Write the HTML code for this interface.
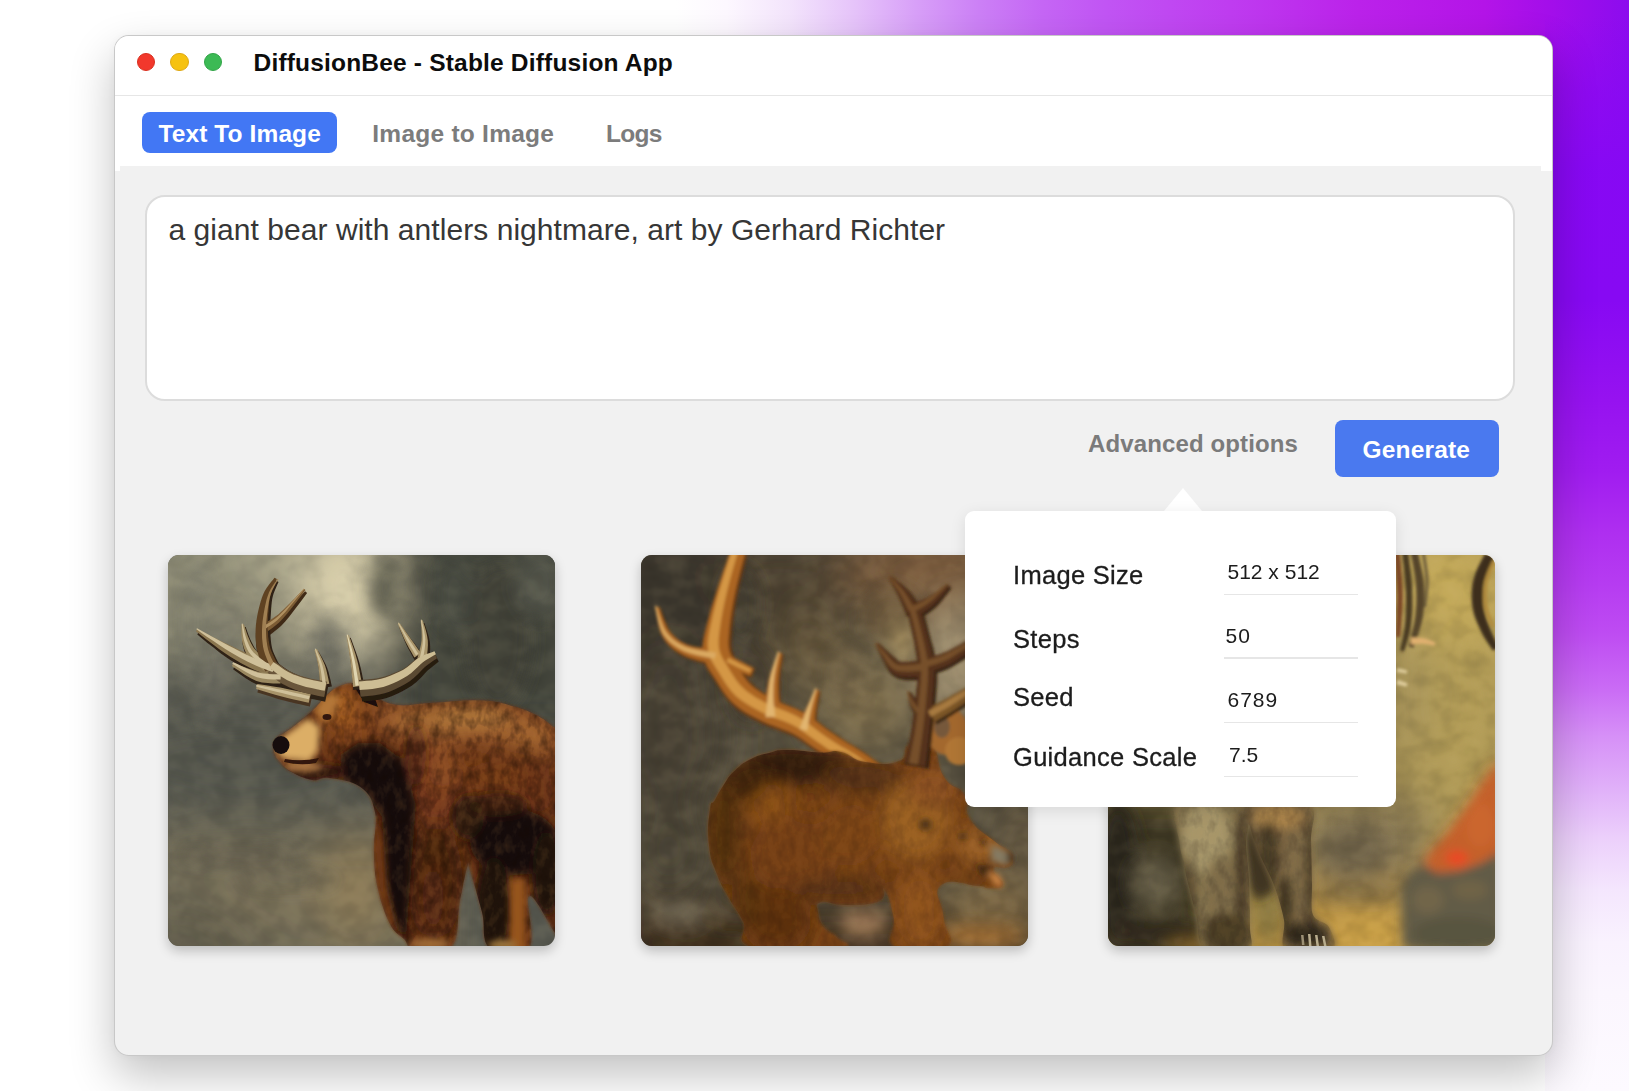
<!DOCTYPE html>
<html lang="en">
<head>
<meta charset="utf-8">
<title>DiffusionBee - Stable Diffusion App</title>
<style>
*{box-sizing:border-box;margin:0;padding:0}
html,body{width:1629px;height:1091px;overflow:hidden}
body{position:relative;background:#fff;font-family:"Liberation Sans",Arial,sans-serif;color:#111}
#bg{position:absolute;left:0;top:0;width:1629px;height:320px;
 background:linear-gradient(to right,#ffffff 0%,#ffffff 41.5%,#fdf8ff 44.6%,#f3e4fc 48.5%,#e6c4fa 52.4%,#d8a0f8 56.2%,#cc80f6 60.1%,#c566f5 64%,#c155f4 67.8%,#bf3cf0 75.6%,#bb22ea 83.4%,#b414e8 91.1%,#a40eea 95%,#8c0cee 100%)}
#bgr{position:absolute;left:1545px;top:0;width:84px;height:1091px;
 background:linear-gradient(to bottom,rgba(134,8,244,0) 15px,rgba(134,8,244,.55) 90px,rgba(134,8,244,.92) 170px,#8709f3 300px,#9612f0 400px,#a01cf0 470px,#ae2ef0 531px,#b63cf1 585px,#be4cf2 634px,#ca6cf5 690px,#d690f7 736px,#e0b0f9 788px,#ecd0fb 839px,#f4e6fd 890px,#f9f2fe 942px,#fbf6fe 993px,#fdfaff 1091px)}
#win{position:absolute;left:114px;top:35px;width:1438.9px;height:1021.3px;border-radius:15px;background:#f1f1f1;
 border:1px solid rgba(0,0,0,.17);
 box-shadow:0 20px 45px rgba(0,0,0,.24),0 0 8px rgba(0,0,0,.03);overflow:hidden}
#inner{position:absolute;left:-115px;top:-36px;width:1629px;height:1091px}
#titlebar{position:absolute;left:115px;top:36px;width:1438px;height:60px;background:#fff;border-bottom:1.5px solid #e6e6e6}
.tl{position:absolute;top:53px;width:18.4px;height:18.4px;border-radius:50%}
#tl1{left:136.5px;background:#f2382c;border:1px solid #d9301f}
#tl2{left:170.2px;background:#f6c210;border:1px solid #dfa915}
#tl3{left:204.1px;background:#3cba55;border:1px solid #32a548}
#title{position:absolute;left:253.5px;top:47.8px;font-size:24.5px;font-weight:bold;letter-spacing:.19px;white-space:nowrap;color:#0c0c0c;line-height:30px}
#tabs{position:absolute;left:115px;top:96px;width:1438px;height:69.5px;background:#fff}
#nl{position:absolute;left:115px;top:165px;width:5px;height:6px;background:#fff}
#nr{position:absolute;left:1541px;top:165px;width:12px;height:6px;background:#fff}
#tab1{position:absolute;left:142px;top:111.5px;width:195px;height:41.5px;border-radius:8px;background:#4277f4}
.tabt{position:absolute;top:119px;font-size:24.5px;font-weight:bold;white-space:nowrap;line-height:30px}
#t1{left:158.5px;color:#fff;letter-spacing:.1px}
#t2{left:372.3px;color:#7c7c7c;letter-spacing:.25px}
#t3{left:606px;color:#7c7c7c;letter-spacing:-.7px}
#ta{position:absolute;left:144.5px;top:195px;width:1370px;height:205.5px;border-radius:20px;background:#fff;border:2px solid #dcdcdc}
#prompt{position:absolute;left:168.5px;top:212px;font-size:30px;letter-spacing:.05px;white-space:nowrap;color:#363636;line-height:36px}
#adv{position:absolute;left:1088px;top:428.9px;font-size:24px;font-weight:bold;letter-spacing:.13px;color:#7b7b7b;white-space:nowrap;line-height:30px}
#gen{position:absolute;left:1334.5px;top:420px;width:164px;height:57px;border-radius:8px;background:#4a79ef}
#gent{position:absolute;left:1362.5px;top:434.8px;font-size:24.5px;font-weight:bold;letter-spacing:.17px;color:#fff;white-space:nowrap;line-height:30px}
.img{position:absolute;top:555px;width:387px;height:391px;border-radius:11px;overflow:hidden;box-shadow:0 5px 12px rgba(0,0,0,.22)}
.img svg{display:block;position:absolute;left:0;top:0}
#im1{left:168px}#im2{left:641px}#im3{left:1107.5px}
#pop{position:absolute;left:964.5px;top:510.5px;width:431.5px;height:296.5px;border-radius:9px;background:#fff;box-shadow:0 4px 16px rgba(0,0,0,.10)}
#tri{position:absolute;left:1164px;top:487.5px;width:0;height:0;border-left:19px solid transparent;border-right:19px solid transparent;border-bottom:23.5px solid #fff}
.lb{position:absolute;left:1013px;font-size:25.5px;color:#1c1c1c;-webkit-text-stroke:.3px #1c1c1c;white-space:nowrap;line-height:30px;letter-spacing:.3px}
.vl{position:absolute;left:1227.5px;font-size:21px;color:#1c1c1c;white-space:nowrap;line-height:26px}
.ul{position:absolute;left:1223.5px;width:134px;height:1.5px;background:#e6e6e6}
</style>
</head>
<body>
<div id="bg"></div><div id="bgr"></div>
<div id="win"><div id="inner">
 <div id="titlebar"></div>
 <div class="tl" id="tl1"></div><div class="tl" id="tl2"></div><div class="tl" id="tl3"></div>
 <div id="title">DiffusionBee - Stable Diffusion App</div>
 <div id="tabs"></div><div id="nl"></div><div id="nr"></div>
 <div id="tab1"></div>
 <div class="tabt" id="t1">Text To Image</div>
 <div class="tabt" id="t2">Image to Image</div>
 <div class="tabt" id="t3">Logs</div>
 <div id="ta"></div>
 <div id="prompt">a giant bear with antlers nightmare, art by Gerhard Richter</div>
 <div id="adv">Advanced options</div>
 <div id="gen"></div><div id="gent">Generate</div>

 <div class="img" id="im1"><svg width="387" height="391" viewBox="0 0 387 391"><defs><filter id="p1b22" x="-60%" y="-60%" width="220%" height="220%"><feGaussianBlur stdDeviation="22"/></filter><filter id="p1b14" x="-60%" y="-60%" width="220%" height="220%"><feGaussianBlur stdDeviation="14"/></filter><filter id="p1b9" x="-60%" y="-60%" width="220%" height="220%"><feGaussianBlur stdDeviation="9"/></filter><filter id="p1b5" x="-60%" y="-60%" width="220%" height="220%"><feGaussianBlur stdDeviation="5"/></filter><filter id="p1b3" x="-60%" y="-60%" width="220%" height="220%"><feGaussianBlur stdDeviation="3"/></filter><filter id="p1b2" x="-60%" y="-60%" width="220%" height="220%"><feGaussianBlur stdDeviation="1.7"/></filter><filter id="p1b1" x="-60%" y="-60%" width="220%" height="220%"><feGaussianBlur stdDeviation="0.7"/></filter><filter id="p1nd" x="0" y="0" width="100%" height="100%" color-interpolation-filters="sRGB"><feTurbulence type="fractalNoise" baseFrequency="0.045 0.06" numOctaves="4" seed="161"/><feColorMatrix type="matrix" values="0 0 0 0 0  0 0 0 0 0  0 0 0 0 0  1.8 0 0 0 -0.75"/><feGaussianBlur stdDeviation="1.6"/></filter><filter id="p1nl" x="0" y="0" width="100%" height="100%" color-interpolation-filters="sRGB"><feTurbulence type="fractalNoise" baseFrequency="0.045 0.06" numOctaves="4" seed="161"/><feColorMatrix type="matrix" values="0 0 0 0 1  0 0 0 0 .92  0 0 0 0 .7  -1.8 0 0 0 1.0"/><feGaussianBlur stdDeviation="1.6"/></filter><filter id="p1fd" x="0" y="0" width="100%" height="100%" color-interpolation-filters="sRGB"><feTurbulence type="fractalNoise" baseFrequency="0.11 0.07" numOctaves="3" seed="164"/><feColorMatrix type="matrix" values="0 0 0 0 .08  0 0 0 0 .03  0 0 0 0 0  2.4 0 0 0 -1.0"/></filter><filter id="p1fl" x="0" y="0" width="100%" height="100%" color-interpolation-filters="sRGB"><feTurbulence type="fractalNoise" baseFrequency="0.11 0.07" numOctaves="3" seed="164"/><feColorMatrix type="matrix" values="0 0 0 0 .95  0 0 0 0 .65  0 0 0 0 .3  -2.4 0 0 0 1.25"/></filter><clipPath id="p1cl"><rect width="387" height="391"/></clipPath></defs><g clip-path="url(#p1cl)"><rect width="387" height="391" fill="#595a51"/><g filter="url(#p1b22)"><ellipse cx="50" cy="35" rx="150" ry="75" fill="#8f8d77"/><ellipse cx="120" cy="70" rx="120" ry="45" fill="#85836f"/><ellipse cx="150" cy="8" rx="85" ry="38" fill="#a8a48a"/><ellipse cx="178" cy="38" rx="44" ry="70" fill="#d8cfac"/><rect x="226" y="-40" width="220" height="225" fill="#45463d"/><ellipse cx="80" cy="205" rx="150" ry="48" fill="#55564e"/><rect x="-40" y="268" width="330" height="170" fill="#706a57"/><ellipse cx="115" cy="345" rx="75" ry="26" fill="#7c725a"/><ellipse cx="190" cy="335" rx="34" ry="55" fill="#8e7d59"/><ellipse cx="15" cy="385" rx="70" ry="22" fill="#5a5747"/></g><g filter="url(#p1b9)"><ellipse cx="160" cy="92" rx="20" ry="32" fill="#68685e" opacity="0.85"/><ellipse cx="30" cy="70" rx="12" ry="70" fill="#77766a" opacity="0.55"/><ellipse cx="52" cy="110" rx="7" ry="70" fill="#737268" opacity="0.45" transform="rotate(12 52 110)"/><ellipse cx="330" cy="80" rx="34" ry="75" fill="#414239" opacity="0.8"/><ellipse cx="285" cy="40" rx="20" ry="40" fill="#50524a" opacity="0.6"/><ellipse cx="372" cy="28" rx="25" ry="35" fill="#595b50" opacity="0.8"/><ellipse cx="218" cy="32" rx="16" ry="34" fill="#5c5c4c" opacity="0.85"/><ellipse cx="70" cy="300" rx="60" ry="9" fill="#625d4d" opacity="0.7"/><ellipse cx="120" cy="325" rx="50" ry="7" fill="#666050" opacity="0.6"/></g><rect width="387" height="391" filter="url(#p1nd)" opacity="0.13"/><rect width="387" height="391" filter="url(#p1nl)" opacity="0.09"/><g filter="url(#p1b2)"><path d="M106,190 C106.6,187 105,186.8 109,183 C113,179.2 118.6,176.8 126,171 C133.4,165.2 139.2,160.4 146,154 C152.8,147.6 154.8,143.6 160,139 C165.2,134.4 166.8,133.2 172,131 C177.2,128.8 180.8,127.6 186,128 C191.2,128.4 194,130.4 198,133 C202,135.6 199.8,137.6 206,141 C212.2,144.4 217.6,148.6 229,150 C240.4,151.4 246,148.9 263,148 C280,147.1 297.4,144.8 314,145.5 C330.6,146.2 334.8,148.4 346,151.5 C357.2,154.6 361.8,156.7 370,161 C378.2,165.3 383,170.6 387,173 C391,175.4 389.4,131.6 390,173 C390.6,214.4 390.6,339 390,380 C389.4,421 392.8,385.8 387,378 C381.2,370.2 366.2,338 361,341 C355.8,344 368.8,382.6 361,393 C353.2,403.4 331.4,400.2 322,393 C312.6,385.8 318,372.6 314,357 C310,341.4 304.8,324.6 302,315 C299.2,305.4 302,303 300,309 C298,315 295.4,328.2 292,345 C288.6,361.8 292.2,383.4 283,393 C273.8,402.6 255.4,394.8 246,393 C236.6,391.2 240.8,388.8 236,384 C231.2,379.2 227.3,379.4 222,369 C216.7,358.6 212.7,346.6 209.5,332 C206.3,317.4 206.5,311 206,296 C205.5,281 209.7,269.8 207,257 C204.3,244.2 201.7,238.8 192.5,232 C183.3,225.2 170.7,224.4 161,223 C151.3,221.6 151.8,226.4 144,225 C136.2,223.6 128.6,219.8 122,216 C115.4,212.2 114.2,209.6 111,206 C107.8,202.4 107,201.2 106,198 C105,194.8 105.4,193 106,190Z" fill="#653116"/></g><clipPath id="p1bc"><path d="M106,190 C106.6,187 105,186.8 109,183 C113,179.2 118.6,176.8 126,171 C133.4,165.2 139.2,160.4 146,154 C152.8,147.6 154.8,143.6 160,139 C165.2,134.4 166.8,133.2 172,131 C177.2,128.8 180.8,127.6 186,128 C191.2,128.4 194,130.4 198,133 C202,135.6 199.8,137.6 206,141 C212.2,144.4 217.6,148.6 229,150 C240.4,151.4 246,148.9 263,148 C280,147.1 297.4,144.8 314,145.5 C330.6,146.2 334.8,148.4 346,151.5 C357.2,154.6 361.8,156.7 370,161 C378.2,165.3 383,170.6 387,173 C391,175.4 389.4,131.6 390,173 C390.6,214.4 390.6,339 390,380 C389.4,421 392.8,385.8 387,378 C381.2,370.2 366.2,338 361,341 C355.8,344 368.8,382.6 361,393 C353.2,403.4 331.4,400.2 322,393 C312.6,385.8 318,372.6 314,357 C310,341.4 304.8,324.6 302,315 C299.2,305.4 302,303 300,309 C298,315 295.4,328.2 292,345 C288.6,361.8 292.2,383.4 283,393 C273.8,402.6 255.4,394.8 246,393 C236.6,391.2 240.8,388.8 236,384 C231.2,379.2 227.3,379.4 222,369 C216.7,358.6 212.7,346.6 209.5,332 C206.3,317.4 206.5,311 206,296 C205.5,281 209.7,269.8 207,257 C204.3,244.2 201.7,238.8 192.5,232 C183.3,225.2 170.7,224.4 161,223 C151.3,221.6 151.8,226.4 144,225 C136.2,223.6 128.6,219.8 122,216 C115.4,212.2 114.2,209.6 111,206 C107.8,202.4 107,201.2 106,198 C105,194.8 105.4,193 106,190Z" fill="#000"/></clipPath><g filter="url(#p1b9)" clip-path="url(#p1bc)"><path d="M200,138 L229,150 L263,148 L314,145 L346,151 L370,161 L390,173 L390,205 L350,192 L300,187 L250,190 L215,178Z" fill="#94572a"/><ellipse cx="300" cy="163" rx="45" ry="10" fill="#b98442" opacity="0.7"/><ellipse cx="250" cy="166" rx="25" ry="9" fill="#a66f35" opacity="0.7"/><ellipse cx="360" cy="180" rx="22" ry="12" fill="#a56931" opacity="0.7"/><ellipse cx="268" cy="232" rx="28" ry="44" fill="#75391a"/><ellipse cx="275" cy="212" rx="16" ry="22" fill="#905122" opacity="0.8"/><ellipse cx="335" cy="222" rx="45" ry="22" fill="#733a17"/><ellipse cx="370" cy="235" rx="20" ry="30" fill="#683313"/><ellipse cx="268" cy="325" rx="26" ry="58" fill="#4c2510"/><ellipse cx="264" cy="345" rx="12" ry="35" fill="#5e2e13" opacity="0.8"/><ellipse cx="172" cy="152" rx="22" ry="20" fill="#a35d24"/><ellipse cx="185" cy="182" rx="18" ry="22" fill="#89481a"/></g><g filter="url(#p1b5)" clip-path="url(#p1bc)"><path d="M172,200 L190,188 L212,188 L236,206 L248,250 L242,330 L238,388 L226,369 L217,330 L214,262 L196,236 L176,226Z" fill="#170f09"/><ellipse cx="205" cy="212" rx="20" ry="18" fill="#140c08"/><ellipse cx="346" cy="287" rx="44" ry="33" fill="#170f09"/><ellipse cx="300" cy="262" rx="16" ry="22" fill="#26160d" opacity="0.8"/><ellipse cx="326" cy="352" rx="18" ry="50" fill="#20130b"/><ellipse cx="379" cy="318" rx="15" ry="42" fill="#20130b"/><ellipse cx="146" cy="217" rx="32" ry="8" fill="#2e150a"/><ellipse cx="330" cy="250" rx="30" ry="12" fill="#341c0f" opacity="0.7"/><ellipse cx="248" cy="200" rx="10" ry="30" fill="#43220f" opacity="0.6"/></g><g clip-path="url(#p1bc)"><rect width="387" height="391" filter="url(#p1fd)" opacity="0.45"/><rect width="387" height="391" filter="url(#p1fl)" opacity="0.12"/></g><g filter="url(#p1b3)" clip-path="url(#p1bc)"><rect x="342" y="324" width="15" height="75" fill="#96541f"/><path d="M206,262 L206,296 L209.5,332 L222,369 L230,380 L219,340 L214,280Z" fill="#713a14"/><path d="M109,186 L124,175 L140,163 L152,172 L150,196 L142,206 L116,204 L107,196Z" fill="#dcae66"/><path d="M146,154 L160,139 L172,140 L166,158 L156,168Z" fill="#b47737"/><ellipse cx="262" cy="389" rx="20" ry="6" fill="#9e6936"/><ellipse cx="334" cy="390" rx="14" ry="5" fill="#9e773c"/><ellipse cx="135" cy="212" rx="20" ry="5" fill="#ad7743"/></g><g filter="url(#p1b1)"><ellipse cx="113" cy="190" rx="8.5" ry="9" fill="#130e0b"/><ellipse cx="159" cy="162" rx="4.5" ry="3" fill="#301609"/><path d="M116,207 Q132,211 148,208 L151,203 Q134,207 117,204 Z" fill="#301509"/><path d="M184,128 L198,133 L206,141 L210,152 L196,147Z" fill="#1a100a"/></g><g filter="url(#p1b1)"><path d="M110,110.3 L107.1,109.3 L103.2,108.1 L98.6,106.7 L93.8,105.1 L89.2,103.4 L84.6,101.5 L79.9,99.4 L74.9,97.1 L69.6,94.7 L64,92.1 L57.4,89.1 L49.8,85.6 L42.2,82.1 L35.6,79 L30.9,76.8 L29.3,79.6 L33.2,82.8 L38.9,87.4 L45.5,92.6 L52.2,97.9 L58.2,102.3 L63.5,105.8 L68.6,109 L73.5,111.9 L78.3,114.6 L83,117 L88,119.4 L93,121.6 L97.6,123.5 L101.5,125 L104.2,126.1Z" fill="#2f2014"/><path d="M106.2,109.7 L103.8,108 L100.4,105.6 L96.7,103 L93.2,100.4 L90.7,98.1 L89,96.2 L87.5,94.2 L86.1,91.9 L84.8,89.5 L83.5,86.9 L82.1,84 L80.7,80.6 L79.5,77.2 L78.4,74.1 L77.7,72 L74.5,72.4 L74.4,74.7 L74.3,77.9 L74.2,81.8 L74.3,85.8 L74.7,89.5 L75.4,92.8 L76.3,96.1 L77.5,99.4 L79.2,102.8 L81.5,106.3 L84.7,109.8 L88.6,113.2 L92.4,116.3 L95.7,118.9 L98,120.7Z" fill="#2f2014"/><path d="M114.3,119.7 L111.2,119.6 L106.8,119.6 L102,119.5 L97.1,119.2 L92.7,118.6 L87.9,117.4 L82,115.6 L76.1,113.5 L70.8,111.5 L67.1,110.2 L65.1,114.2 L68.2,116.5 L72.7,119.8 L78.1,123.5 L83.8,127.1 L89.5,129.8 L95.3,131.4 L101.1,132.2 L106.5,132.4 L110.9,132.5 L113.9,132.7Z" fill="#2f2014"/><path d="M144.3,140.8 L140.6,140 L135.4,138.9 L129.3,137.5 L123,136.2 L117.2,135.1 L111.5,134.1 L105.4,133.2 L99.5,132.3 L94.4,131.6 L90.8,131 L89.4,137.4 L92.8,138.5 L97.7,140 L103.4,141.8 L109.3,143.7 L115,145.3 L120.7,146.7 L126.9,148.2 L133,149.6 L138.2,150.8 L141.9,151.6Z" fill="#4a3522"/><path d="M163.9,131.4 L163.3,128.9 L162.6,125.5 L161.6,121.4 L160.5,117.1 L159.2,113.1 L157.6,109.3 L155.6,105.4 L153.6,101.8 L151.8,98.8 L150.6,96.6 L147.6,97.8 L148.1,100.2 L148.9,103.6 L149.7,107.6 L150.4,111.6 L151,115.3 L151.4,118.9 L151.7,123 L151.9,127 L152.1,130.5 L152.3,133Z" fill="#2f2014"/><path d="M102.1,79.8 L103.9,78.5 L106.3,76.6 L109.5,74.1 L113,70.9 L116.8,67 L121.2,61.7 L126.3,55.1 L131.5,48.3 L136,42.2 L139.1,38.1 L137.1,36.3 L133.4,40 L128.1,45.4 L122.1,51.4 L116.2,57.1 L111.4,61.4 L107.5,64.3 L104,66.4 L100.9,68.1 L98.1,69.4 L96.1,70.6Z" fill="#3f2b18"/><path d="M112.8,112.7 L111.5,110.1 L109.7,106.5 L107.7,102.6 L105.9,98.6 L104.6,95.2 L103.8,91.9 L103.2,88.4 L102.8,84.8 L102.5,81 L102.2,77.3 L102.1,73.5 L102.2,69.7 L102.4,65.8 L102.6,61.9 L102.9,58.1 L103.1,54.5 L103.4,51.1 L103.7,47.8 L104.1,44.6 L104.7,41.7 L105.6,38.5 L106.9,35.2 L108.3,31.9 L109.6,29.1 L110.5,27 L107.7,25.4 L106.3,27 L104.3,29.4 L101.9,32.2 L99.5,35.4 L97.5,38.7 L95.9,42.1 L94.5,45.5 L93.3,49 L92.3,52.6 L91.3,56.3 L90.4,60.1 L89.6,64.2 L88.8,68.4 L88.3,72.8 L88,77.1 L87.8,81.4 L87.9,85.7 L88.2,90.1 L88.7,94.6 L89.6,99.2 L91,104.1 L92.8,109 L94.7,113.5 L96.4,117.2 L97.4,119.7Z" fill="#2f2014"/><path d="M161,127.6 L157.8,127 L153.1,126.2 L148,125.2 L142.9,124.2 L138.7,123.1 L135.3,122.1 L132.1,121 L129.1,119.8 L126.3,118.6 L123.6,117.3 L120.8,115.7 L117.8,113.8 L114.8,111.7 L112.2,109.8 L110.2,108.5 L100,121.9 L101.7,123.4 L104.3,125.5 L107.4,128.1 L111,130.7 L114.6,133.1 L118.1,135.1 L121.7,136.8 L125.4,138.4 L129.2,139.9 L133.5,141.3 L138.4,142.7 L144,144 L149.4,145.1 L154,146.1 L157.2,146.8Z" fill="#2f2014"/><path d="M255.2,100.6 L253.7,98.5 L251.6,95.5 L249.1,92.1 L246.6,88.6 L244.2,85.4 L241.8,82.2 L239.3,78.7 L236.8,75.4 L234.7,72.6 L233.2,70.6 L231,71.8 L231.9,74.2 L233.2,77.5 L234.7,81.3 L236.3,85.3 L238,89 L239.8,92.7 L241.9,96.6 L244,100.4 L245.7,103.6 L247,105.8Z" fill="#2f2014"/><path d="M260.9,109.3 L261.1,106.5 L261.5,102.6 L261.9,97.9 L262.2,93 L262,88.2 L261.2,83.5 L259.9,78.8 L258.5,74.4 L257.2,70.6 L256.4,68 L253.8,68.4 L254,71.2 L254.2,75.2 L254.4,79.7 L254.5,84.2 L254.2,88.2 L253.5,92.1 L252.4,96.4 L251.2,100.7 L250.1,104.4 L249.3,107.1Z" fill="#2f2014"/><path d="M196.9,133.4 L196.2,129.9 L195.2,124.9 L194,119 L192.7,113 L191.3,107.4 L189.6,101.9 L187.6,96.2 L185.6,90.7 L183.9,86.1 L182.7,82.8 L179.5,83.6 L180,87.1 L180.7,92 L181.5,97.7 L182.3,103.6 L182.9,109 L183.5,114.5 L184.1,120.5 L184.6,126.4 L185,131.4 L185.3,135Z" fill="#2f2014"/><path d="M194.1,146.6 L197.1,146.2 L201.6,145.9 L207,145.3 L212.9,144.4 L218.7,143 L224.1,141 L229.3,138.8 L234.4,136.3 L239.2,133.6 L243.7,130.7 L247.9,127.5 L251.5,124.1 L254.5,121 L257,118.3 L259.1,116.1 L261.4,114 L264.1,111.9 L266.7,109.8 L269,108 L270.7,106.7 L267.5,99.7 L265.4,100.1 L262.5,100.6 L259,101.4 L255.1,102.6 L251.1,104.3 L247.3,106.6 L243.9,109.2 L240.7,111.7 L237.7,113.9 L234.5,115.7 L230.7,117.4 L226.4,119.2 L222,120.9 L217.5,122.3 L213.5,123.4 L209.3,124.2 L204.6,124.8 L199.7,125.2 L195.3,125.6 L192.1,125.8Z" fill="#261a11"/><path d="M108,109 L105.1,108.1 L101.2,106.9 L96.6,105.4 L91.8,103.7 L87.2,101.9 L82.6,100 L77.8,97.8 L72.9,95.5 L67.6,93 L62,90.3 L55.5,87.2 L48,83.5 L40.5,79.8 L34,76.6 L29.4,74.3 L28,76.5 L32.1,79.6 L37.8,84 L44.5,89.1 L51.3,94.2 L57.4,98.5 L62.7,101.9 L67.8,105 L72.7,107.9 L77.5,110.4 L82.2,112.9 L87.2,115.2 L92.2,117.3 L96.8,119.2 L100.7,120.7 L103.4,121.8Z" fill="#8a7650"/><path d="M104,108 L101.6,106.3 L98.2,103.9 L94.5,101.2 L91,98.5 L88.4,96.1 L86.6,94.1 L85.1,91.9 L83.7,89.5 L82.4,87 L81.2,84.3 L79.9,81.3 L78.7,77.9 L77.6,74.4 L76.6,71.4 L76,69.2 L73.4,69.6 L73.4,71.8 L73.4,75.1 L73.4,78.8 L73.7,82.8 L74.2,86.5 L75,89.7 L75.8,92.8 L77.1,96.1 L78.7,99.3 L81,102.7 L84.2,106 L88,109.4 L91.8,112.5 L95.2,115 L97.4,116.8Z" fill="#9c895f"/><path d="M112.9,118.2 L109.7,118.1 L105.4,118.1 L100.5,117.9 L95.6,117.6 L91,116.9 L86.1,115.6 L80.2,113.6 L74.3,111.3 L69.2,109.2 L65.5,107.8 L63.9,111 L67.1,113.2 L71.7,116.3 L77.1,119.9 L82.8,123.3 L88.4,125.9 L94,127.4 L99.8,128.1 L105.1,128.4 L109.5,128.5 L112.5,128.6Z" fill="#9a8860"/><path d="M142.7,139.1 L139,138.3 L133.7,137.1 L127.7,135.8 L121.4,134.5 L115.6,133.3 L109.9,132.3 L103.8,131.2 L97.9,130.3 L92.9,129.5 L89.3,128.9 L88.1,133.9 L91.6,135 L96.5,136.5 L102.2,138.2 L108.1,139.9 L113.8,141.5 L119.5,142.9 L125.8,144.4 L131.8,145.7 L137.1,146.9 L140.7,147.7Z" fill="#a8946a"/><path d="M161.3,128.7 L160.8,126.3 L160.1,122.8 L159.2,118.8 L158.2,114.5 L157,110.6 L155.4,106.7 L153.6,102.9 L151.7,99.2 L150,96.1 L148.9,93.9 L146.5,94.9 L147.1,97.3 L147.9,100.6 L148.9,104.6 L149.7,108.6 L150.4,112.2 L150.9,115.9 L151.3,120 L151.6,124.1 L151.9,127.6 L152.1,130.1Z" fill="#a8946a"/><path d="M100.1,76.1 L101.9,74.8 L104.4,73 L107.5,70.5 L111.1,67.5 L114.9,63.6 L119.3,58.4 L124.5,51.9 L129.7,45.2 L134.3,39.2 L137.5,35.1 L135.9,33.7 L132.3,37.5 L127.1,42.9 L121.1,49 L115.3,54.7 L110.5,59.2 L106.7,62.1 L103.1,64.4 L100,66.2 L97.3,67.5 L95.3,68.7Z" fill="#7b5b34"/><path d="M110.2,110.4 L108.9,107.8 L107.1,104.3 L105.2,100.3 L103.4,96.2 L102.1,92.7 L101.3,89.3 L100.7,85.7 L100.2,82 L100,78.2 L99.8,74.4 L99.7,70.7 L99.8,66.8 L100,62.9 L100.3,59 L100.6,55.2 L100.9,51.6 L101.2,48.1 L101.6,44.8 L102.1,41.6 L102.8,38.6 L103.8,35.5 L105.1,32.2 L106.6,28.9 L107.9,26.1 L108.9,24.1 L106.5,22.7 L105.2,24.4 L103.2,26.8 L100.9,29.7 L98.6,32.9 L96.6,36.2 L95.1,39.5 L93.8,42.9 L92.7,46.4 L91.7,49.9 L90.8,53.6 L89.9,57.5 L89.1,61.5 L88.4,65.7 L87.9,70.1 L87.6,74.4 L87.5,78.6 L87.6,82.9 L87.9,87.2 L88.4,91.6 L89.3,96.1 L90.7,100.9 L92.5,105.7 L94.4,110.2 L96.1,113.9 L97.2,116.4Z" fill="#5f4324"/><path d="M159.2,126.8 L156,126.1 L151.4,125.3 L146.2,124.3 L141.1,123.2 L136.8,122.1 L133.3,121.1 L130,119.9 L127,118.7 L124.1,117.4 L121.3,116.1 L118.4,114.4 L115.4,112.4 L112.4,110.3 L109.7,108.4 L107.8,107 L99.6,117.8 L101.4,119.2 L103.9,121.3 L107.1,123.8 L110.5,126.4 L114.1,128.7 L117.6,130.6 L121,132.3 L124.6,133.8 L128.4,135.3 L132.6,136.7 L137.5,138 L143,139.3 L148.4,140.4 L153,141.4 L156.2,142Z" fill="#6a563a"/><path d="M253,98.3 L251.5,96.2 L249.4,93.2 L247,89.8 L244.5,86.2 L242.2,82.9 L239.9,79.7 L237.4,76.2 L235.1,72.8 L233,69.9 L231.6,67.9 L229.8,68.9 L230.8,71.2 L232.1,74.5 L233.8,78.3 L235.5,82.2 L237.2,85.9 L239.1,89.5 L241.2,93.4 L243.3,97.1 L245.1,100.3 L246.4,102.5Z" fill="#a8946a"/><path d="M258.3,106.3 L258.6,103.5 L259.1,99.6 L259.6,95 L259.9,90.1 L259.8,85.4 L259.1,80.8 L258,76.1 L256.7,71.6 L255.5,67.9 L254.7,65.2 L252.7,65.6 L252.9,68.4 L253.3,72.3 L253.6,76.8 L253.7,81.4 L253.6,85.4 L253,89.4 L252,93.7 L250.9,98.1 L249.8,101.8 L249.1,104.5Z" fill="#a8946a"/><path d="M194.3,130.7 L193.7,127.2 L192.7,122.2 L191.6,116.4 L190.4,110.3 L189,104.7 L187.5,99.3 L185.6,93.5 L183.7,88.1 L182.1,83.4 L180.9,80.1 L178.5,80.7 L179,84.2 L179.8,89 L180.7,94.7 L181.6,100.6 L182.4,106.1 L183,111.6 L183.6,117.6 L184.2,123.4 L184.7,128.5 L185.1,132.1Z" fill="#a8946a"/><path d="M192.5,141.7 L195.5,141.4 L200,141 L205.4,140.4 L211.2,139.6 L216.8,138.2 L222,136.4 L227.2,134.2 L232.2,131.8 L236.9,129.2 L241.4,126.4 L245.5,123.3 L249,120.1 L252,117 L254.6,114.3 L256.9,112.1 L259.4,110.1 L262.2,108 L264.9,106.1 L267.3,104.4 L269,103.2 L266.4,97.6 L264.4,98.1 L261.5,98.7 L258.1,99.7 L254.3,100.9 L250.5,102.7 L246.9,105 L243.5,107.6 L240.4,110.2 L237.3,112.5 L234,114.4 L230.2,116.3 L225.8,118.1 L221.3,119.9 L216.8,121.4 L212.6,122.6 L208.3,123.4 L203.4,124.1 L198.5,124.5 L194.1,124.8 L190.9,125.1Z" fill="#5a4830"/><path d="M106.8,110.6 L104,109.7 L100.1,108.3 L95.5,106.8 L90.7,105 L85.9,103.1 L81.3,101 L76.5,98.7 L71.6,96.3 L66.4,93.6 L60.9,90.8 L54.4,87.3 L47.1,83.3 L39.8,79.3 L33.5,75.7 L29,73.3 L28.4,74.3 L32.5,77.2 L38.5,81.4 L45.4,86.1 L52.3,90.8 L58.5,94.8 L63.9,98.1 L69.1,101 L74,103.7 L78.8,106.2 L83.5,108.5 L88.3,110.7 L93.3,112.7 L97.9,114.5 L101.8,115.9 L104.6,117Z" fill="#cfc09a"/><path d="M101.4,110 L99.1,108.2 L95.7,105.8 L91.9,103 L88.4,100.1 L85.6,97.4 L83.6,94.9 L82.1,92.4 L80.8,89.8 L79.6,87 L78.5,84.2 L77.5,81 L76.6,77.4 L75.8,73.8 L75.1,70.7 L74.7,68.5 L73.7,68.7 L73.9,70.9 L74.2,74.1 L74.6,77.8 L75.1,81.5 L75.9,85 L76.8,88 L77.8,91 L79.1,94 L80.7,96.9 L82.8,99.8 L85.8,102.9 L89.5,106 L93.3,109 L96.7,111.5 L99,113.2Z" fill="#cfc09a"/><path d="M112.8,119.4 L109.7,119.3 L105.3,119.3 L100.3,119.1 L95.2,118.6 L90.4,117.8 L85.2,116.1 L79.4,113.7 L73.7,111.2 L68.7,108.8 L65.1,107.2 L64.3,108.8 L67.6,110.8 L72.3,113.7 L77.9,116.9 L83.6,120 L89,122.2 L94.4,123.5 L100,124.2 L105.2,124.4 L109.5,124.5 L112.6,124.6Z" fill="#cfc09a"/><path d="M141.6,141 L137.9,140.2 L132.7,139 L126.6,137.7 L120.3,136.3 L114.5,135.1 L108.8,133.9 L102.8,132.6 L96.9,131.4 L92,130.4 L88.4,129.7 L88,131.5 L91.5,132.5 L96.4,133.7 L102.2,135.2 L108.2,136.7 L113.9,138.1 L119.6,139.5 L125.9,140.9 L131.9,142.2 L137.2,143.4 L140.8,144.2Z" fill="#cfc09a"/><path d="M157.9,128.3 L157.5,125.9 L157,122.4 L156.3,118.4 L155.4,114.2 L154.4,110.3 L153.2,106.5 L151.6,102.6 L150,98.9 L148.6,95.7 L147.6,93.4 L146.8,93.8 L147.5,96.1 L148.6,99.4 L149.8,103.2 L151,107.2 L152,110.9 L152.7,114.7 L153.3,118.8 L153.8,122.9 L154.2,126.4 L154.5,128.9Z" fill="#cfc09a"/><path d="M97.9,73.4 L99.8,72.1 L102.3,70.4 L105.5,68.2 L109,65.4 L112.8,61.8 L117.4,56.9 L122.7,50.6 L128.2,44.1 L133,38.3 L136.3,34.3 L135.7,33.7 L132.2,37.6 L127.2,43.2 L121.5,49.5 L115.9,55.5 L111.2,60.2 L107.4,63.4 L103.8,65.9 L100.7,67.9 L98,69.4 L96.1,70.6Z" fill="#b09060"/><path d="M108.1,113 L106.9,110.4 L105.2,106.8 L103.2,102.7 L101.4,98.4 L100.1,94.4 L99.3,90.7 L98.7,86.8 L98.3,82.9 L98.1,79 L98,75 L98.1,71.1 L98.3,67 L98.7,63 L99.1,59.1 L99.6,55.3 L100.1,51.6 L100.7,48.1 L101.3,44.8 L102.1,41.5 L103,38.4 L104.3,35.2 L106,31.9 L107.7,28.8 L109.3,26.1 L110.4,24.2 L109.6,23.8 L108.4,25.6 L106.6,28.1 L104.6,31.1 L102.6,34.3 L101,37.6 L99.8,40.8 L98.7,44.1 L97.9,47.6 L97.1,51.1 L96.4,54.7 L95.7,58.6 L95.1,62.6 L94.5,66.7 L94.2,70.9 L94,75 L94,79.1 L94.1,83.2 L94.5,87.3 L95,91.4 L95.9,95.6 L97.3,99.9 L99.1,104.5 L101,108.8 L102.7,112.4 L103.9,115Z" fill="#a08052"/><path d="M158.3,127.8 L155.1,127.2 L150.5,126.3 L145.2,125.2 L140,124.1 L135.6,123 L131.9,121.8 L128.5,120.6 L125.4,119.4 L122.3,118 L119.4,116.5 L116.4,114.7 L113.2,112.5 L110.2,110.3 L107.5,108.4 L105.6,107 L101.4,112.6 L103.2,114.1 L105.7,116.1 L108.8,118.5 L112.2,121 L115.6,123.1 L118.9,124.9 L122.2,126.5 L125.7,127.9 L129.4,129.3 L133.4,130.6 L138.1,131.9 L143.5,133.1 L148.9,134.2 L153.5,135.2 L156.7,135.8Z" fill="#cbbb92"/><path d="M250.4,98.8 L249,96.7 L247,93.6 L244.7,90.1 L242.3,86.4 L240.1,83 L238,79.7 L235.8,76 L233.7,72.5 L231.8,69.5 L230.5,67.4 L229.9,67.8 L231,70 L232.6,73.2 L234.4,76.8 L236.4,80.6 L238.3,84.2 L240.3,87.7 L242.5,91.4 L244.7,95.1 L246.6,98.2 L248,100.4Z" fill="#cfc09a"/><path d="M254.9,104.9 L255.4,102.2 L256,98.3 L256.7,93.8 L257.2,89.1 L257.4,84.6 L256.9,80.2 L256.1,75.5 L255.1,71 L254.2,67.2 L253.6,64.5 L252.8,64.7 L253.2,67.4 L253.8,71.3 L254.5,75.8 L254.9,80.4 L255,84.6 L254.6,88.8 L253.9,93.3 L252.9,97.7 L252.1,101.6 L251.5,104.3Z" fill="#cfc09a"/><path d="M190.9,130.3 L190.4,126.8 L189.6,121.8 L188.6,116 L187.6,109.9 L186.5,104.4 L185.1,98.9 L183.6,93.1 L182,87.6 L180.6,82.8 L179.7,79.5 L178.7,79.7 L179.5,83.1 L180.5,87.9 L181.7,93.6 L182.9,99.4 L183.9,104.8 L184.8,110.4 L185.6,116.4 L186.4,122.3 L187,127.3 L187.5,130.9Z" fill="#e0d5b0"/><path d="M191.6,135.1 L194.7,134.8 L199.1,134.5 L204.4,133.9 L210,133.1 L215.3,131.9 L220.3,130.2 L225.3,128.2 L230.2,125.9 L234.8,123.5 L239.1,120.9 L243,118.2 L246.5,115.1 L249.5,112.2 L252.3,109.5 L254.9,107.3 L257.7,105.3 L260.7,103.4 L263.6,101.7 L266.1,100.3 L267.9,99.3 L266.5,96.3 L264.6,97 L261.8,97.9 L258.5,99 L255,100.5 L251.5,102.3 L248.2,104.6 L245,107.2 L241.9,109.9 L238.7,112.4 L235.3,114.7 L231.3,116.7 L226.8,118.8 L222.2,120.7 L217.5,122.4 L213.1,123.7 L208.5,124.7 L203.4,125.4 L198.4,125.8 L194,126.2 L190.8,126.5Z" fill="#cdbd94"/></g></g></svg></div>
 <div class="img" id="im2"><svg width="387" height="391" viewBox="0 0 387 391"><defs><filter id="p2b22" x="-60%" y="-60%" width="220%" height="220%"><feGaussianBlur stdDeviation="22"/></filter><filter id="p2b14" x="-60%" y="-60%" width="220%" height="220%"><feGaussianBlur stdDeviation="14"/></filter><filter id="p2b9" x="-60%" y="-60%" width="220%" height="220%"><feGaussianBlur stdDeviation="9"/></filter><filter id="p2b5" x="-60%" y="-60%" width="220%" height="220%"><feGaussianBlur stdDeviation="5"/></filter><filter id="p2b3" x="-60%" y="-60%" width="220%" height="220%"><feGaussianBlur stdDeviation="3"/></filter><filter id="p2b2" x="-60%" y="-60%" width="220%" height="220%"><feGaussianBlur stdDeviation="1.7"/></filter><filter id="p2b1" x="-60%" y="-60%" width="220%" height="220%"><feGaussianBlur stdDeviation="0.7"/></filter><filter id="p2nd" x="0" y="0" width="100%" height="100%" color-interpolation-filters="sRGB"><feTurbulence type="fractalNoise" baseFrequency="0.045 0.06" numOctaves="4" seed="162"/><feColorMatrix type="matrix" values="0 0 0 0 0  0 0 0 0 0  0 0 0 0 0  1.8 0 0 0 -0.75"/><feGaussianBlur stdDeviation="1.6"/></filter><filter id="p2nl" x="0" y="0" width="100%" height="100%" color-interpolation-filters="sRGB"><feTurbulence type="fractalNoise" baseFrequency="0.045 0.06" numOctaves="4" seed="162"/><feColorMatrix type="matrix" values="0 0 0 0 1  0 0 0 0 .92  0 0 0 0 .7  -1.8 0 0 0 1.0"/><feGaussianBlur stdDeviation="1.6"/></filter><filter id="p2fd" x="0" y="0" width="100%" height="100%" color-interpolation-filters="sRGB"><feTurbulence type="fractalNoise" baseFrequency="0.11 0.07" numOctaves="3" seed="165"/><feColorMatrix type="matrix" values="0 0 0 0 .08  0 0 0 0 .03  0 0 0 0 0  2.4 0 0 0 -1.0"/></filter><filter id="p2fl" x="0" y="0" width="100%" height="100%" color-interpolation-filters="sRGB"><feTurbulence type="fractalNoise" baseFrequency="0.11 0.07" numOctaves="3" seed="165"/><feColorMatrix type="matrix" values="0 0 0 0 .95  0 0 0 0 .65  0 0 0 0 .3  -2.4 0 0 0 1.25"/></filter><clipPath id="p2cl"><rect width="387" height="391"/></clipPath></defs><g clip-path="url(#p2cl)"><rect width="387" height="391" fill="#585140"/><g filter="url(#p2b22)"><ellipse cx="35" cy="40" rx="95" ry="85" fill="#3c392d"/><ellipse cx="150" cy="22" rx="70" ry="42" fill="#4e4230"/><ellipse cx="300" cy="15" rx="100" ry="50" fill="#7a5c3c"/><ellipse cx="335" cy="105" rx="65" ry="60" fill="#a29272"/><ellipse cx="225" cy="150" rx="48" ry="45" fill="#80704e"/><ellipse cx="170" cy="95" rx="45" ry="40" fill="#64543a"/><ellipse cx="25" cy="180" rx="60" ry="90" fill="#484334"/><ellipse cx="28" cy="300" rx="50" ry="45" fill="#4e4737"/><rect x="-30" y="354" width="450" height="70" fill="#453620"/><ellipse cx="350" cy="350" rx="50" ry="28" fill="#86704a"/><ellipse cx="382" cy="285" rx="16" ry="45" fill="#6a5a40"/></g><g filter="url(#p2b9)"><ellipse cx="250" cy="60" rx="30" ry="30" fill="#6e5a3c" opacity="0.7"/><ellipse cx="205" cy="118" rx="18" ry="30" fill="#74654a" opacity="0.7"/><ellipse cx="262" cy="88" rx="15" ry="24" fill="#a08a5c" opacity="0.9"/><ellipse cx="100" cy="50" rx="20" ry="40" fill="#454032" opacity="0.6"/><ellipse cx="38" cy="358" rx="30" ry="9" fill="#8e8770" opacity="0.8"/><ellipse cx="222" cy="368" rx="24" ry="14" fill="#b08660" opacity="0.8"/><ellipse cx="340" cy="381" rx="45" ry="9" fill="#c08038" opacity="0.9"/><ellipse cx="60" cy="388" rx="70" ry="7" fill="#382c1a" opacity="0.9"/><ellipse cx="110" cy="130" rx="25" ry="40" fill="#3f3a2c" opacity="0.5"/></g><rect width="387" height="391" filter="url(#p2nd)" opacity="0.16"/><rect width="387" height="391" filter="url(#p2nl)" opacity="0.1"/><g filter="url(#p2b2)"><path d="M240.4,209.7 L238,207.9 L234.4,205.3 L230.3,202.2 L225.9,199.1 L221.8,196.3 L218.1,193.9 L214.6,191.8 L211.6,190 L208.7,188.3 L205.9,186.6 L202.8,184.6 L199.5,182.4 L196,180.1 L192.4,177.7 L188.6,175 L184.7,172.2 L180.5,168.9 L175.8,165.2 L170.5,161.4 L164.5,157.7 L157.8,154.4 L151,151.5 L144.5,148.9 L138.6,146.4 L133.4,143.9 L128.4,141.1 L123.6,138.3 L119.2,135.4 L115.4,132.6 L112.2,129.8 L109.4,126.8 L106.7,123.4 L104,119.5 L101.3,115.3 L98.7,110.8 L96.1,106.5 L94.1,102.9 L92.7,99.9 L91.9,97.6 L91.3,95.4 L90.8,92.3 L90.6,88.1 L90.8,83 L91.2,77.1 L91.8,70.8 L92.5,64.5 L93.4,58 L94.5,51.3 L95.8,44.3 L97.2,37.2 L98.9,29.4 L101,20.9 L103.2,12.4 L105.1,5.1 L106.4,-0 L90,-5 L88.3,0 L85.7,7.1 L82.8,15.4 L79.9,24 L77.2,31.8 L74.9,38.9 L72.6,45.8 L70.4,52.8 L68.4,59.6 L66.6,66.2 L64.9,72.4 L63.3,78.7 L61.8,85.3 L60.9,92.3 L61.1,99.6 L62.6,106.7 L65.2,112.9 L68.2,118 L71.1,122.2 L73.7,126.2 L76.4,130.6 L79.5,135.5 L83.1,140.8 L87.3,146.1 L92.2,151.2 L97.6,155.7 L103.3,159.5 L109.1,163 L114.9,166.1 L121,169.1 L127.7,172 L134.6,174.6 L141.2,177 L147,179.2 L151.9,181.3 L156.3,183.8 L160.6,186.6 L164.9,189.6 L169.4,192.9 L173.8,196 L177.9,198.7 L181.7,201.3 L185.3,203.8 L188.9,206.1 L192.5,208.4 L196.3,210.5 L199.7,212.2 L202.9,213.7 L205.7,215.1 L208.6,216.7 L212,219 L216,221.9 L220,224.8 L223.5,227.5 L226,229.3Z" fill="#673a13"/><path d="M78.7,95.1 L74.2,94.6 L67.9,94 L60.8,93.1 L54.1,92 L48.7,90.6 L44.3,88.7 L40.2,86.5 L36.6,84 L33.3,81.1 L30.3,77.9 L27.6,73.7 L25,68.1 L22.6,62.1 L20.7,56.7 L19.3,52.9 L15.1,54.1 L15.8,58 L16.6,63.7 L17.8,70.3 L19.5,77.1 L22.1,83.1 L25.4,88 L29.2,92.3 L33.5,96 L38.3,99.4 L43.7,102.4 L50.3,105.1 L57.8,107.4 L65.1,109.3 L71.4,110.8 L75.7,111.9Z" fill="#673a13"/><path d="M86.5,112.9 L88.1,113.7 L90.5,114.9 L93.2,116.2 L96.1,117.6 L98.7,118.7 L101.3,119.8 L104,120.8 L106.5,121.7 L108.7,122.4 L110.2,123 L114.2,114 L112.8,113.2 L110.8,112.1 L108.4,110.9 L106,109.5 L103.7,108.3 L101.3,107 L98.6,105.5 L95.9,104.1 L93.6,102.9 L91.9,102.1Z" fill="#673a13"/><path d="M145.7,164.3 L144.9,161.9 L143.7,158.7 L142.3,154.9 L141.1,150.9 L140.2,146.8 L139.7,142.6 L139.4,138.2 L139.2,133.6 L139.2,129 L139.4,124.4 L139.8,119.4 L140.4,113.7 L141.2,108.1 L142,103.2 L142.5,99.8 L138.3,98.6 L137,101.8 L135.1,106.4 L132.9,111.7 L130.8,117.3 L129,122.6 L127.8,127.5 L126.8,132.5 L125.9,137.3 L125.1,141.9 L124.2,146.2 L123.1,150.6 L121.8,155 L120.5,159 L119.5,162.3 L118.7,164.7Z" fill="#673a13"/><path d="M175.9,180.2 L175.8,177.5 L175.8,173.7 L175.7,169.3 L175.7,164.7 L176,160.2 L176.5,155.4 L177.3,150.1 L178.2,144.7 L179,140.1 L179.5,136.9 L175.5,135.5 L174,138.4 L171.8,142.6 L169.3,147.4 L166.8,152.3 L164.4,156.8 L162.2,161 L159.9,165.2 L157.7,169.1 L155.9,172.5 L154.5,174.8Z" fill="#673a13"/><path d="M238.2,209.6 L235.8,207.8 L232.2,205.1 L228.1,202.1 L223.8,199 L219.7,196.2 L216,193.9 L212.6,191.8 L209.5,190.1 L206.7,188.4 L203.7,186.6 L200.6,184.6 L197.3,182.4 L193.8,180.1 L190.1,177.6 L186.3,175 L182.4,172.1 L178.3,168.8 L173.6,165.2 L168.3,161.4 L162.4,157.8 L155.9,154.6 L149.1,151.8 L142.6,149.2 L136.6,146.7 L131.3,144.2 L126.3,141.4 L121.4,138.5 L116.9,135.6 L113,132.7 L109.6,129.8 L106.6,126.7 L103.8,123.1 L101.1,119.1 L98.4,114.9 L95.7,110.4 L93.2,106.1 L91.1,102.4 L89.6,99.4 L88.6,96.8 L88,94.2 L87.5,90.8 L87.4,86.4 L87.7,81.2 L88.2,75.2 L88.8,69 L89.6,62.7 L90.6,56.2 L91.8,49.4 L93.1,42.4 L94.6,35.3 L96.4,27.6 L98.5,19 L100.7,10.6 L102.7,3.3 L104,-1.9 L90,-6.1 L88.2,-1.1 L85.8,6 L82.9,14.3 L80,22.8 L77.4,30.7 L75.1,37.7 L72.9,44.7 L70.8,51.6 L68.9,58.4 L67.2,65 L65.6,71.2 L64,77.5 L62.6,84 L61.8,90.8 L62,97.8 L63.5,104.6 L66,110.5 L68.8,115.4 L71.6,119.6 L74.3,123.6 L77,128 L80,132.9 L83.5,138.1 L87.6,143.3 L92.4,148.2 L97.7,152.6 L103.2,156.4 L108.9,159.7 L114.7,162.8 L120.7,165.8 L127.2,168.8 L134.1,171.3 L140.6,173.7 L146.6,175.9 L151.6,178.2 L156.1,180.7 L160.5,183.6 L164.8,186.7 L169.3,189.9 L173.7,193 L177.8,195.8 L181.5,198.3 L185.1,200.8 L188.6,203.1 L192.3,205.4 L195.9,207.5 L199.4,209.2 L202.5,210.7 L205.4,212.1 L208.3,213.8 L211.8,216.1 L215.8,219 L219.8,222 L223.3,224.6 L225.8,226.4Z" fill="#ab6522"/><path d="M77.3,94.8 L72.8,94.2 L66.5,93.5 L59.4,92.6 L52.6,91.5 L47.1,89.9 L42.7,88 L38.6,85.7 L34.9,83.1 L31.5,80.1 L28.6,76.8 L25.8,72.4 L23.3,66.7 L21,60.7 L19.2,55.3 L17.8,51.5 L14.2,52.5 L14.9,56.4 L15.8,62.1 L17.1,68.7 L18.9,75.4 L21.4,81.2 L24.7,86 L28.5,90.2 L32.8,93.9 L37.6,97.1 L42.9,100.1 L49.4,102.7 L56.8,104.9 L64.1,106.7 L70.4,108.1 L74.7,109.2Z" fill="#ab6522"/><path d="M85.6,110.7 L87.3,111.5 L89.6,112.6 L92.4,114 L95.2,115.3 L97.8,116.5 L100.4,117.5 L103.1,118.6 L105.6,119.5 L107.8,120.3 L109.3,120.8 L112.7,113.2 L111.3,112.4 L109.3,111.3 L106.9,110.1 L104.5,108.7 L102.2,107.5 L99.7,106.2 L97,104.8 L94.3,103.4 L92,102.2 L90.4,101.3Z" fill="#ab6522"/><path d="M142.6,162.8 L141.9,160.4 L140.8,157.2 L139.7,153.4 L138.6,149.3 L137.9,145.3 L137.5,141.1 L137.2,136.6 L137.1,132 L137.2,127.4 L137.4,122.8 L137.9,117.7 L138.7,112.1 L139.6,106.5 L140.4,101.6 L141,98.2 L137.4,97.2 L136.2,100.4 L134.3,105 L132.2,110.4 L130.2,115.9 L128.6,121.2 L127.4,126.1 L126.5,131.1 L125.7,135.8 L125,140.4 L124.1,144.7 L123.1,149.1 L122,153.5 L121,157.5 L120,160.8 L119.4,163.2Z" fill="#ab6522"/><path d="M173.2,178.3 L173.2,175.6 L173.3,171.9 L173.4,167.5 L173.6,162.9 L173.9,158.5 L174.6,153.7 L175.5,148.4 L176.5,143.1 L177.4,138.5 L178.1,135.3 L174.5,134.1 L173.1,137.1 L171.1,141.3 L168.7,146.1 L166.3,151.1 L164.1,155.5 L162,159.7 L159.8,164 L157.8,168 L156.1,171.3 L154.8,173.7Z" fill="#ab6522"/><path d="M232.1,212.5 L229.6,210.6 L226.1,208 L222,205 L217.8,202 L213.9,199.3 L210.4,197.2 L207.2,195.3 L204.1,193.6 L201,191.9 L197.9,190.1 L194.6,188 L191.2,185.8 L187.7,183.4 L184,180.9 L180.1,178.2 L176.1,175.3 L171.9,172 L167.3,168.5 L162.3,165 L156.8,161.7 L150.7,158.8 L144.2,156.1 L137.6,153.6 L131.4,151.1 L125.7,148.5 L120.4,145.6 L115.2,142.7 L110.4,139.6 L106,136.5 L102.1,133.1 L98.6,129.5 L95.4,125.5 L92.4,121.1 L89.7,116.7 L87,112.2 L84.4,108 L82.1,104.2 L80.2,100.6 L78.8,97.1 L77.9,93.2 L77.6,88.8 L77.7,83.7 L78.3,78.1 L79.1,72.1 L80,65.8 L81.1,59.5 L82.3,52.9 L83.8,46 L85.4,39.1 L87.1,32 L89.1,24.2 L91.5,15.6 L93.9,7.2 L96,0 L97.4,-5.1 L91.6,-6.9 L89.9,-1.8 L87.6,5.3 L84.9,13.7 L82.3,22.2 L79.9,30 L77.9,37.1 L75.9,44.1 L74.1,51 L72.4,57.7 L71,64.2 L69.6,70.4 L68.4,76.6 L67.3,82.7 L66.8,88.8 L67.1,94.8 L68.3,100.3 L70.3,105.3 L72.8,109.6 L75.4,113.7 L78,117.8 L80.7,122.2 L83.6,126.9 L86.9,131.7 L90.6,136.4 L94.9,140.9 L99.6,144.8 L104.7,148.3 L110,151.6 L115.5,154.6 L121.3,157.5 L127.5,160.4 L134.1,162.9 L140.6,165.3 L146.8,167.7 L152.2,170.3 L157.1,173.1 L161.8,176.2 L166.2,179.5 L170.6,182.7 L174.9,185.8 L178.9,188.5 L182.6,191 L186.1,193.4 L189.6,195.7 L193.1,197.9 L196.6,199.9 L199.8,201.6 L202.9,203.2 L206,204.8 L209.1,206.7 L212.8,209.1 L216.8,212.1 L220.9,215.1 L224.4,217.7 L226.9,219.5Z" fill="#d49745"/><path d="M75.1,97.8 L70.6,97.1 L64.3,96.2 L57.1,95 L50.2,93.5 L44.4,91.7 L39.7,89.4 L35.4,86.9 L31.5,83.9 L28,80.6 L25,76.9 L22.3,72.1 L20,66.1 L18,59.9 L16.4,54.4 L15.2,50.6 L13.8,51 L14.7,54.9 L15.8,60.5 L17.4,66.9 L19.4,73.3 L22,78.7 L25.2,83.1 L28.8,86.9 L33,90.3 L37.5,93.3 L42.6,95.9 L48.8,98.2 L56,100.2 L63.3,101.7 L69.6,102.9 L73.9,103.8Z" fill="#dcaa62"/><path d="M85.5,106.8 L87.2,107.6 L89.5,108.8 L92.2,110.1 L95,111.5 L97.6,112.7 L100.1,113.8 L102.7,114.9 L105.2,115.9 L107.3,116.8 L108.8,117.4 L110.2,114.2 L108.8,113.5 L106.7,112.5 L104.3,111.3 L101.8,110.1 L99.4,108.9 L96.9,107.7 L94.2,106.3 L91.5,104.9 L89.1,103.7 L87.5,102.8Z" fill="#d49745"/><path d="M134.4,161.7 L134,159.4 L133.6,156.1 L133.1,152.2 L132.6,148.1 L132.4,143.9 L132.3,139.7 L132.4,135.2 L132.5,130.5 L132.9,125.8 L133.4,121.1 L134.2,116 L135.3,110.4 L136.6,104.8 L137.7,100.1 L138.4,96.7 L137,96.3 L135.9,99.6 L134.4,104.2 L132.6,109.7 L131,115.3 L129.6,120.5 L128.7,125.3 L128.1,130.1 L127.5,134.9 L127.1,139.4 L126.6,143.7 L126.1,148 L125.7,152.2 L125.2,156.2 L124.9,159.5 L124.6,161.9Z" fill="#e2b570"/><path d="M166.3,175.8 L166.7,173.2 L167.3,169.5 L167.9,165.3 L168.7,160.8 L169.6,156.4 L170.7,151.8 L172,146.5 L173.4,141.4 L174.7,136.9 L175.5,133.7 L174.1,133.3 L172.9,136.3 L171.1,140.6 L169.2,145.6 L167.2,150.6 L165.4,155.2 L163.8,159.4 L162.3,163.8 L160.8,167.9 L159.5,171.4 L158.7,173.8Z" fill="#e2b570"/></g><g filter="url(#p2b2)"><path d="M74,245 C78,237.9 78.7,235.9 84,228 C89.3,220.1 87.1,221.9 94,215.5 C100.9,209.1 100.9,208.7 110,204 C119.1,199.3 118.4,200.4 128,198 C137.6,195.6 132.1,195.1 146,195 C159.9,194.9 165.6,197.1 180,197.6 C194.4,198.1 188.1,194.5 200,197 C211.9,199.5 209,204.6 224.5,207 C240,209.4 246.4,210.5 258,206 C269.6,201.5 259.5,195.3 268,190 C276.5,184.7 280.7,177.5 290,186 C299.3,194.5 293.9,207.6 303,222 C312.1,236.4 317.1,228.8 324,240 C330.9,251.2 321.4,251.9 329,264 C336.6,276.1 342.1,277 352.5,285.5 C362.9,294 362.8,291.1 368,296 C373.2,300.9 372,299.7 372,304 C372,308.3 373.3,309.3 368,312 C362.7,314.7 353.6,309.2 352,314 C350.4,318.8 363.6,324.9 362,330 C360.4,335.1 352.4,332.7 346,333 C339.6,333.3 350.3,331.8 338,331 C325.7,330.2 309.5,321.7 300,330 C290.5,338.3 301.2,345.2 302.5,362 C303.8,378.8 317.7,384.7 305,393 C292.3,401.3 269,401.3 255,393 C241,384.7 255.7,377.7 252.5,362 C249.3,346.3 246.9,338.3 243,334 C239.1,329.7 248.1,341.7 238,346 C227.9,350.3 220.5,349.7 205,350 C189.5,350.3 187.5,345.1 180,347 C172.5,348.9 176.2,350.3 177,357 C177.8,363.7 177.9,365.3 183,372 C188.1,378.7 192,376.4 196,382 C200,387.6 219.9,390.1 198,393 C176.1,395.9 139.6,400.2 114,393 C88.4,385.8 108.9,379.3 102,366 C95.1,352.7 94.9,355.5 88,343 C81.1,330.5 81.3,333.1 76,319 C70.7,304.9 69.9,307.2 68,290 C66.1,272.8 67.4,266.5 69,254.5 C70.6,242.5 70,252.1 74,245Z" fill="#774317"/></g><clipPath id="p2bc"><path d="M74,245 C78,237.9 78.7,235.9 84,228 C89.3,220.1 87.1,221.9 94,215.5 C100.9,209.1 100.9,208.7 110,204 C119.1,199.3 118.4,200.4 128,198 C137.6,195.6 132.1,195.1 146,195 C159.9,194.9 165.6,197.1 180,197.6 C194.4,198.1 188.1,194.5 200,197 C211.9,199.5 209,204.6 224.5,207 C240,209.4 246.4,210.5 258,206 C269.6,201.5 259.5,195.3 268,190 C276.5,184.7 280.7,177.5 290,186 C299.3,194.5 293.9,207.6 303,222 C312.1,236.4 317.1,228.8 324,240 C330.9,251.2 321.4,251.9 329,264 C336.6,276.1 342.1,277 352.5,285.5 C362.9,294 362.8,291.1 368,296 C373.2,300.9 372,299.7 372,304 C372,308.3 373.3,309.3 368,312 C362.7,314.7 353.6,309.2 352,314 C350.4,318.8 363.6,324.9 362,330 C360.4,335.1 352.4,332.7 346,333 C339.6,333.3 350.3,331.8 338,331 C325.7,330.2 309.5,321.7 300,330 C290.5,338.3 301.2,345.2 302.5,362 C303.8,378.8 317.7,384.7 305,393 C292.3,401.3 269,401.3 255,393 C241,384.7 255.7,377.7 252.5,362 C249.3,346.3 246.9,338.3 243,334 C239.1,329.7 248.1,341.7 238,346 C227.9,350.3 220.5,349.7 205,350 C189.5,350.3 187.5,345.1 180,347 C172.5,348.9 176.2,350.3 177,357 C177.8,363.7 177.9,365.3 183,372 C188.1,378.7 192,376.4 196,382 C200,387.6 219.9,390.1 198,393 C176.1,395.9 139.6,400.2 114,393 C88.4,385.8 108.9,379.3 102,366 C95.1,352.7 94.9,355.5 88,343 C81.1,330.5 81.3,333.1 76,319 C70.7,304.9 69.9,307.2 68,290 C66.1,272.8 67.4,266.5 69,254.5 C70.6,242.5 70,252.1 74,245Z" fill="#000"/></clipPath><g filter="url(#p2b9)" clip-path="url(#p2bc)"><ellipse cx="150" cy="300" rx="45" ry="40" fill="#764016"/><ellipse cx="128" cy="246" rx="22" ry="22" fill="#8c5118"/><ellipse cx="82" cy="275" rx="20" ry="55" fill="#543011"/><ellipse cx="150" cy="210" rx="55" ry="20" fill="#321c0c"/><ellipse cx="105" cy="225" rx="22" ry="20" fill="#42250f"/><ellipse cx="222" cy="222" rx="40" ry="16" fill="#543012"/><ellipse cx="275" cy="265" rx="35" ry="40" fill="#9a6024"/><ellipse cx="292" cy="232" rx="25" ry="22" fill="#8c5121"/><ellipse cx="210" cy="280" rx="35" ry="35" fill="#7c4519"/><ellipse cx="200" cy="334" rx="48" ry="12" fill="#573213"/><ellipse cx="135" cy="365" rx="35" ry="32" fill="#5e3210"/><ellipse cx="105" cy="345" rx="14" ry="30" fill="#573111"/><ellipse cx="278" cy="355" rx="24" ry="40" fill="#8f531e"/><ellipse cx="340" cy="290" rx="25" ry="20" fill="#9a6125"/><ellipse cx="320" cy="326" rx="25" ry="7" fill="#6c3c16"/></g><g clip-path="url(#p2bc)"><rect width="387" height="391" filter="url(#p2fd)" opacity="0.14"/><rect width="387" height="391" filter="url(#p2fl)" opacity="0.05"/></g><g filter="url(#p2b3)"><ellipse cx="284.5" cy="269.5" rx="6" ry="6" fill="#4a3018"/><ellipse cx="322" cy="281" rx="3.5" ry="3.5" fill="#4a3018"/><ellipse cx="342.5" cy="287.5" rx="3" ry="3" fill="#2a1a10"/><path d="M350,289 L366,296 L372,304 L366,311 L350,306Z" fill="#857a62"/><ellipse cx="369" cy="303" rx="3.5" ry="5" fill="#3a3026"/><path d="M335,309 L350,312 L352,322 L340,320Z" fill="#2e1c10"/><path d="M345,316 L358,320 L363,331 L355,331Z" fill="#d08a48"/></g><g filter="url(#p2b2)"><ellipse cx="306" cy="176" rx="21" ry="24" fill="#a3682e"/><ellipse cx="318" cy="196" rx="14" ry="14" fill="#b07634"/><ellipse cx="301" cy="172" rx="8" ry="11" fill="#76583a"/><path d="M280.5,53.6 L279,51.3 L276.7,48 L274,44 L271.1,39.9 L268,36.2 L264.6,32.9 L260.8,29.6 L257.1,26.8 L253.9,24.4 L251.7,22.6 L248.7,25.4 L250.1,27.8 L252.1,31.2 L254.4,35.1 L256.6,39.1 L258.4,42.8 L260,46.5 L261.7,50.7 L263.4,55 L264.8,58.7 L265.9,61.4Z" fill="#2e1c0e"/><path d="M277,64.9 L279.3,63.3 L282.6,61.2 L286.5,58.5 L290.7,55.5 L294.6,52.2 L298.3,48.4 L301.9,44 L305.3,39.7 L308.2,35.9 L310.2,33.3 L307.4,30.3 L304.6,32.1 L300.8,34.8 L296.3,37.8 L291.8,40.6 L287.8,42.8 L284,44.5 L279.8,46.2 L275.7,47.8 L272,49.1 L269.4,50.1Z" fill="#2e1c0e"/><path d="M284.2,104.5 L280.4,105.1 L275.1,106 L269.4,106.9 L264.4,107.4 L261.5,107.5 L260,107.4 L258,106.4 L255.6,104.5 L252.9,101.9 L250.1,99.4 L247.4,97.1 L244.7,94.8 L242.3,92.5 L240.2,90.4 L238.7,89 L235.3,91.4 L236.2,93.3 L237.4,95.9 L238.9,99.1 L240.6,102.5 L242.3,105.6 L243.8,108.6 L245.4,112.2 L247.8,116.2 L251.4,120.2 L256.9,123.5 L263.5,124.9 L270.4,125.2 L277,125 L282.5,124.6 L286.2,124.5Z" fill="#2e1c0e"/><path d="M284.9,156 L283.7,154.8 L282,153.1 L280.2,151.2 L278.4,149.3 L276.9,147.6 L275.5,145.8 L274.1,143.6 L272.8,141.4 L271.6,139.4 L270.8,138 L267.6,139 L267.8,140.6 L268,142.9 L268.3,145.7 L268.8,148.6 L269.5,151.4 L270.7,154.2 L272.1,156.9 L273.5,159.4 L274.7,161.5 L275.5,163Z" fill="#2e1c0e"/><path d="M289.7,120.3 L292.1,119.5 L295.5,118.3 L299.9,116.8 L304.6,114.9 L309.4,112.7 L314.5,109.8 L319.8,106.5 L325.1,103.2 L329.5,100.2 L332.6,98.2 L325.8,86.8 L322.5,88.5 L317.9,91 L312.6,93.8 L307.4,96.4 L303,98.3 L299.1,99.6 L294.9,100.6 L290.9,101.5 L287.4,102.1 L284.7,102.7Z" fill="#2e1c0e"/><path d="M295.4,169.6 L297.2,168.5 L299.8,167 L303,165.2 L306.5,163 L310.4,160.7 L314.8,157.8 L320.1,154.4 L325.3,151 L329.9,148 L333.1,145.9 L325.3,133.1 L322,135 L317.2,137.8 L311.8,140.9 L306.5,143.9 L302,146.3 L298.4,148.2 L294.8,149.8 L291.7,151.3 L289,152.5 L287,153.4Z" fill="#2e1c0e"/><path d="M287.7,213.7 L288.1,209.6 L288.7,203.9 L289.4,197.1 L290.1,190 L290.8,183 L291.5,176.3 L292.3,169.5 L293,162.5 L293.7,155.4 L294.3,148.5 L294.8,141.7 L295.4,134.7 L295.8,127.6 L296,120.3 L295.7,112.9 L294.7,105.5 L293.3,98.3 L291.6,91.4 L289.8,84.9 L288.2,78.7 L286.5,72.4 L284.8,66 L283,60 L281.6,55.1 L280.5,51.5 L265.9,55.5 L266.8,59.1 L268.1,64.1 L269.5,70 L271,76.2 L272.2,82.3 L273.4,88.5 L274.5,95 L275.6,101.6 L276.3,107.9 L276.7,114.1 L276.7,120.1 L276.3,126.4 L275.7,133 L274.9,139.7 L274.1,146.5 L273.4,153.3 L272.6,160.1 L271.6,166.9 L270.6,173.6 L269.6,180 L268.2,186.5 L266.7,193.3 L265.1,199.8 L263.7,205.4 L262.7,209.3Z" fill="#2e1c0e"/><path d="M278.3,52.7 L276.8,50.3 L274.6,47 L272,43 L269.1,38.9 L266.1,35.2 L262.8,31.8 L259.2,28.5 L255.6,25.6 L252.5,23.1 L250.3,21.3 L247.7,23.7 L249.2,26 L251.3,29.4 L253.6,33.2 L256,37.2 L257.9,40.8 L259.6,44.6 L261.4,48.8 L263.1,53 L264.6,56.7 L265.7,59.3Z" fill="#54331a"/><path d="M275.3,62.3 L277.6,60.9 L280.9,58.8 L284.8,56.2 L289,53.2 L292.9,50 L296.6,46.3 L300.3,42.1 L303.8,37.8 L306.7,34.1 L308.8,31.6 L306.4,29 L303.7,30.9 L299.9,33.6 L295.5,36.7 L291,39.6 L287.1,42 L283.3,43.8 L279.1,45.6 L275,47.2 L271.3,48.6 L268.7,49.7Z" fill="#54331a"/><path d="M283.2,104.4 L279.3,105 L274,105.9 L268.3,106.7 L263.2,107.1 L260,107.1 L258.2,106.8 L256.1,105.6 L253.7,103.5 L251.1,100.9 L248.4,98.3 L245.7,96 L243.1,93.6 L240.7,91.2 L238.7,89.1 L237.2,87.7 L234.4,89.7 L235.3,91.6 L236.5,94.2 L238.1,97.3 L239.8,100.6 L241.6,103.7 L243.2,106.7 L244.9,110.1 L247.3,114 L250.8,117.8 L256,120.9 L262.4,122.2 L269.2,122.4 L275.7,122.1 L281.2,121.7 L284.8,121.6Z" fill="#54331a"/><path d="M283,155 L281.8,153.8 L280.2,152 L278.4,150.1 L276.6,148.1 L275.2,146.3 L273.9,144.5 L272.5,142.3 L271.2,140 L270.1,138 L269.3,136.6 L266.7,137.4 L266.9,139 L267.1,141.3 L267.5,144 L268,146.9 L268.8,149.7 L270,152.3 L271.5,155 L272.9,157.5 L274.2,159.6 L275,161Z" fill="#54331a"/><path d="M288.1,117.6 L290.5,116.7 L294,115.6 L298.3,114.1 L303,112.3 L307.8,110.2 L312.8,107.4 L318.1,104.1 L323.3,100.8 L327.8,97.9 L330.9,95.9 L325.1,86.1 L321.8,87.8 L317.2,90.4 L311.9,93.2 L306.7,95.9 L302.2,97.8 L298.3,99.2 L294.1,100.3 L290.1,101.1 L286.5,101.8 L283.9,102.4Z" fill="#54331a"/><path d="M293.6,167 L295.5,165.9 L298,164.4 L301.2,162.6 L304.8,160.5 L308.6,158.2 L313.1,155.4 L318.3,152 L323.6,148.6 L328.2,145.6 L331.4,143.5 L324.6,132.5 L321.3,134.4 L316.6,137.2 L311.2,140.3 L305.9,143.4 L301.4,145.8 L297.7,147.7 L294.2,149.4 L291,150.9 L288.4,152.1 L286.4,153Z" fill="#7a5428"/><path d="M284.7,211.9 L285.2,207.8 L285.8,202.1 L286.6,195.4 L287.4,188.2 L288.2,181.3 L288.9,174.6 L289.6,167.8 L290.4,160.8 L291.1,153.8 L291.6,146.8 L292.2,140 L292.8,133.1 L293.3,126 L293.5,118.8 L293.2,111.5 L292.2,104.2 L290.8,97 L289.2,90.2 L287.5,83.6 L285.9,77.4 L284.3,71.1 L282.5,64.8 L280.8,58.8 L279.3,53.8 L278.3,50.3 L265.7,53.7 L266.6,57.3 L267.9,62.3 L269.4,68.2 L270.8,74.4 L272.1,80.6 L273.3,86.8 L274.5,93.3 L275.6,99.8 L276.4,106.3 L276.8,112.5 L276.8,118.7 L276.5,125 L275.9,131.6 L275.1,138.4 L274.4,145.2 L273.6,152 L272.8,158.8 L271.9,165.6 L270.9,172.3 L269.8,178.7 L268.6,185.2 L267.1,192.1 L265.5,198.6 L264.2,204.2 L263.3,208.1Z" fill="#54331a"/><path d="M273.1,53.4 L271.7,51 L269.8,47.5 L267.4,43.5 L264.8,39.3 L262.2,35.6 L259.3,32.2 L256,28.7 L252.8,25.5 L250,22.8 L248.1,20.8 L246.9,21.8 L248.6,24 L251,27.1 L253.7,30.7 L256.4,34.4 L258.8,38 L260.9,41.7 L263,45.9 L265,50 L266.6,53.6 L267.9,56.2Z" fill="#76502a"/><path d="M271.9,57.5 L274.3,56.1 L277.7,54.2 L281.7,51.9 L285.8,49.3 L289.7,46.5 L293.5,43.2 L297.4,39.3 L301.2,35.4 L304.3,32 L306.6,29.6 L305.6,28.6 L303.1,30.7 L299.5,33.6 L295.4,37.1 L291.2,40.4 L287.3,43.1 L283.4,45.4 L279.3,47.5 L275.2,49.4 L271.7,51 L269.1,52.1Z" fill="#76502a"/><path d="M282.2,108.2 L278.4,108.7 L273,109.4 L267,110.1 L261.4,110.3 L257.3,109.9 L254.6,108.8 L252,106.8 L249.6,104.2 L247.3,101.4 L244.9,98.7 L242.5,96.1 L240.2,93.5 L238,90.9 L236.2,88.7 L234.9,87.1 L233.7,87.9 L234.8,89.7 L236.3,92.1 L238,95 L240,98.1 L242.1,100.9 L244,103.8 L246,107 L248.3,110.3 L251.5,113.4 L255.7,115.7 L261.1,116.6 L267.4,116.7 L273.7,116.2 L279.1,115.7 L282.8,115.4Z" fill="#76502a"/><path d="M279.2,155.6 L278.1,154.2 L276.6,152.4 L274.9,150.3 L273.2,148.1 L271.8,146.1 L270.7,144 L269.5,141.6 L268.5,139.2 L267.7,137.1 L267.1,135.6 L265.9,136 L266.3,137.5 L266.8,139.7 L267.4,142.3 L268.2,145 L269.2,147.5 L270.4,149.9 L272,152.4 L273.5,154.7 L274.9,156.7 L275.8,158Z" fill="#76502a"/><path d="M285.4,112 L287.9,111.2 L291.4,110.2 L295.6,108.9 L300.1,107.3 L304.7,105.4 L309.5,102.9 L314.8,99.8 L320.1,96.6 L324.6,93.8 L327.7,91.9 L325.3,87.7 L322.1,89.6 L317.5,92.2 L312.2,95.2 L306.9,98 L302.3,100.2 L298.1,101.8 L293.8,103.1 L289.7,104.1 L286.2,105 L283.6,105.6Z" fill="#76502a"/><path d="M290,161.7 L291.9,160.7 L294.5,159.3 L297.7,157.6 L301.2,155.6 L305,153.4 L309.5,150.7 L314.7,147.4 L320,144.1 L324.7,141.1 L327.9,139.1 L325.1,134.5 L321.8,136.5 L317.1,139.3 L311.7,142.5 L306.5,145.7 L302,148.2 L298.3,150.2 L294.7,152.1 L291.6,153.6 L288.9,154.9 L287,155.9Z" fill="#a77a40"/><path d="M277,209.6 L277.6,205.6 L278.4,199.9 L279.4,193.2 L280.4,186.2 L281.3,179.4 L282.2,172.8 L283,165.9 L283.8,159 L284.5,152 L285.1,145.1 L285.7,138.3 L286.4,131.5 L286.9,124.5 L287.1,117.6 L286.9,110.6 L286.1,103.6 L284.9,96.7 L283.4,89.9 L281.9,83.3 L280.4,77.1 L278.9,70.9 L277.2,64.6 L275.5,58.6 L274.1,53.6 L273.1,50.1 L267.9,51.5 L268.8,55.1 L270.1,60.1 L271.7,66 L273.2,72.3 L274.6,78.5 L275.9,84.7 L277.3,91.2 L278.5,97.8 L279.5,104.5 L280.1,111 L280.2,117.5 L279.9,124.1 L279.3,130.8 L278.6,137.6 L277.9,144.5 L277.2,151.3 L276.4,158.2 L275.6,165 L274.6,171.8 L273.7,178.2 L272.5,184.9 L271.2,191.8 L269.9,198.4 L268.8,204 L268,208Z" fill="#76502a"/></g></g></svg></div>
 <div class="img" id="im3"><svg width="387" height="391" viewBox="0 0 387 391"><defs><filter id="p3b22" x="-60%" y="-60%" width="220%" height="220%"><feGaussianBlur stdDeviation="22"/></filter><filter id="p3b14" x="-60%" y="-60%" width="220%" height="220%"><feGaussianBlur stdDeviation="14"/></filter><filter id="p3b9" x="-60%" y="-60%" width="220%" height="220%"><feGaussianBlur stdDeviation="9"/></filter><filter id="p3b5" x="-60%" y="-60%" width="220%" height="220%"><feGaussianBlur stdDeviation="5"/></filter><filter id="p3b3" x="-60%" y="-60%" width="220%" height="220%"><feGaussianBlur stdDeviation="3"/></filter><filter id="p3b2" x="-60%" y="-60%" width="220%" height="220%"><feGaussianBlur stdDeviation="1.7"/></filter><filter id="p3b1" x="-60%" y="-60%" width="220%" height="220%"><feGaussianBlur stdDeviation="0.7"/></filter><filter id="p3nd" x="0" y="0" width="100%" height="100%" color-interpolation-filters="sRGB"><feTurbulence type="fractalNoise" baseFrequency="0.045 0.06" numOctaves="4" seed="163"/><feColorMatrix type="matrix" values="0 0 0 0 0  0 0 0 0 0  0 0 0 0 0  1.8 0 0 0 -0.75"/><feGaussianBlur stdDeviation="1.6"/></filter><filter id="p3nl" x="0" y="0" width="100%" height="100%" color-interpolation-filters="sRGB"><feTurbulence type="fractalNoise" baseFrequency="0.045 0.06" numOctaves="4" seed="163"/><feColorMatrix type="matrix" values="0 0 0 0 1  0 0 0 0 .92  0 0 0 0 .7  -1.8 0 0 0 1.0"/><feGaussianBlur stdDeviation="1.6"/></filter><filter id="p3fd" x="0" y="0" width="100%" height="100%" color-interpolation-filters="sRGB"><feTurbulence type="fractalNoise" baseFrequency="0.11 0.07" numOctaves="3" seed="166"/><feColorMatrix type="matrix" values="0 0 0 0 .08  0 0 0 0 .03  0 0 0 0 0  2.4 0 0 0 -1.0"/></filter><filter id="p3fl" x="0" y="0" width="100%" height="100%" color-interpolation-filters="sRGB"><feTurbulence type="fractalNoise" baseFrequency="0.11 0.07" numOctaves="3" seed="166"/><feColorMatrix type="matrix" values="0 0 0 0 .95  0 0 0 0 .65  0 0 0 0 .3  -2.4 0 0 0 1.25"/></filter><clipPath id="p3cl"><rect width="387" height="391"/></clipPath></defs><g clip-path="url(#p3cl)"><rect width="387" height="391" fill="#b09a56"/><g filter="url(#p3b22)"><ellipse cx="340" cy="40" rx="60" ry="60" fill="#c2a858"/><ellipse cx="335" cy="150" rx="50" ry="70" fill="#b29c56"/><ellipse cx="298" cy="140" rx="18" ry="80" fill="#a08e5a"/><rect x="-40" y="240" width="160" height="200" fill="#3b3424"/><rect x="190" y="240" width="130" height="100" fill="#857652"/><rect x="120" y="335" width="240" height="90" fill="#bd9443"/><ellipse cx="262" cy="385" rx="40" ry="22" fill="#d6aa4c"/></g><g filter="url(#p3b9)"><ellipse cx="10" cy="320" rx="22" ry="75" fill="#2b271c"/><ellipse cx="48" cy="328" rx="24" ry="28" fill="#6a624a" opacity="0.9"/><ellipse cx="245" cy="295" rx="36" ry="26" fill="#6e6248" opacity="0.9"/><ellipse cx="250" cy="338" rx="45" ry="7" fill="#5a5038" opacity="0.7"/><ellipse cx="160" cy="350" rx="18" ry="40" fill="#8a7840"/><ellipse cx="142" cy="292" rx="10" ry="42" fill="#45392a"/><ellipse cx="50" cy="380" rx="50" ry="14" fill="#352c1d" opacity="0.9"/><ellipse cx="85" cy="392" rx="28" ry="7" fill="#a07830" opacity="0.8"/><path d="M297,330 L312,312 L340,290 L362,262 L392,215 L392,395 L300,395Z" fill="#625c46"/><path d="M318,306 L340,282 L362,252 L392,205 L392,300 L372,310 L350,316 L328,318Z" fill="#c4602c"/><ellipse cx="348" cy="303" rx="10" ry="7" fill="#ee4a2a" opacity="0.9"/><ellipse cx="345" cy="350" rx="40" ry="28" fill="#5c5843" opacity="0.8"/></g><rect width="387" height="391" filter="url(#p3nd)" opacity="0.14"/><rect width="387" height="391" filter="url(#p3nl)" opacity="0.09"/><g filter="url(#p3b5)"><path d="M128,246 L150,246 L160,300 L168,335 L150,345 L140,330 L134,290Z" fill="#3f3423"/><path d="M296,392 L296,335 L301,322 L312,314 L330,318 L352,316 L375,308 L392,296 L392,392Z" fill="#625c46"/><ellipse cx="350" cy="378" rx="45" ry="16" fill="#57523e" opacity="0.8"/><ellipse cx="320" cy="345" rx="16" ry="14" fill="#776a48" opacity="0.7"/><ellipse cx="362" cy="335" rx="18" ry="10" fill="#7a6846" opacity="0.6"/><path d="M318,306 L340,282 L362,252 L392,205 L392,296 L372,308 L350,316 L328,318Z" fill="#c4602c"/><ellipse cx="349" cy="303" rx="11" ry="7" fill="#ee4626" opacity="0.95"/><ellipse cx="372" cy="270" rx="14" ry="22" fill="#cf6a30" opacity="0.7"/></g><g filter="url(#p3b3)"><path d="M69,248 C79.8,241.8 124.5,241 136,248 C147.5,255 137.2,277.2 138,290 C138.8,302.8 140.3,311.3 141,325 C141.7,338.7 142.2,360.3 142,372 C141.8,383.7 147.5,391.2 140,395 C132.5,398.8 105.7,400.8 97,395 C88.3,389.2 91.2,372.5 88,360 C84.8,347.5 80.8,332.5 78,320 C75.2,307.5 72.5,297 71,285 C69.5,273 58.2,254.2 69,248Z" fill="#857550"/><path d="M140,248 C149.7,243.5 190.5,241.8 201,248 C211.5,254.2 202.5,271.3 203,285 C203.5,298.7 203.7,317.5 204,330 C204.3,342.5 202.2,353 205,360 C207.8,367 217.8,366.2 221,372 C224.2,377.8 231.2,391.2 224,395 C216.8,398.8 186,400 178,395 C170,390 178,375.8 176,365 C174,354.2 170,340.8 166,330 C162,319.2 155.8,309.2 152,300 C148.2,290.8 145,283.7 143,275 C141,266.3 130.3,252.5 140,248Z" fill="#74603f"/></g><clipPath id="p3lc"><path d="M69,248 C79.8,241.8 124.5,241 136,248 C147.5,255 137.2,277.2 138,290 C138.8,302.8 140.3,311.3 141,325 C141.7,338.7 142.2,360.3 142,372 C141.8,383.7 147.5,391.2 140,395 C132.5,398.8 105.7,400.8 97,395 C88.3,389.2 91.2,372.5 88,360 C84.8,347.5 80.8,332.5 78,320 C75.2,307.5 72.5,297 71,285 C69.5,273 58.2,254.2 69,248Z" fill="#000"/><path d="M140,248 C149.7,243.5 190.5,241.8 201,248 C211.5,254.2 202.5,271.3 203,285 C203.5,298.7 203.7,317.5 204,330 C204.3,342.5 202.2,353 205,360 C207.8,367 217.8,366.2 221,372 C224.2,377.8 231.2,391.2 224,395 C216.8,398.8 186,400 178,395 C170,390 178,375.8 176,365 C174,354.2 170,340.8 166,330 C162,319.2 155.8,309.2 152,300 C148.2,290.8 145,283.7 143,275 C141,266.3 130.3,252.5 140,248Z" fill="#000"/></clipPath><g filter="url(#p3b5)" clip-path="url(#p3lc)"><ellipse cx="98" cy="282" rx="24" ry="36" fill="#a6966a"/><ellipse cx="112" cy="335" rx="14" ry="36" fill="#7d6c48"/><ellipse cx="134" cy="320" rx="7" ry="70" fill="#4f412a"/><ellipse cx="120" cy="378" rx="26" ry="20" fill="#4e4028"/><ellipse cx="82" cy="340" rx="6" ry="40" fill="#5a4c32"/><ellipse cx="170" cy="262" rx="26" ry="13" fill="#a9834c"/><ellipse cx="160" cy="300" rx="10" ry="35" fill="#4a3c28"/><ellipse cx="190" cy="320" rx="14" ry="45" fill="#7e6a46"/><ellipse cx="202" cy="320" rx="4" ry="60" fill="#3e3222"/><ellipse cx="198" cy="380" rx="22" ry="12" fill="#33291c"/><ellipse cx="178" cy="350" rx="8" ry="30" fill="#4a3c28"/></g><g clip-path="url(#p3lc)"><rect width="387" height="391" filter="url(#p3fd)" opacity="0.16"/><rect width="387" height="391" filter="url(#p3fl)" opacity="0.05"/></g><g filter="url(#p3b1)"><path d="M200,379 L202.5,379 L203.5,391 L201,391Z" fill="#b9ad8e"/><path d="M207,380 L209.5,380 L211,391 L208.5,391Z" fill="#b9ad8e"/><path d="M214,381 L216.5,381 L218.5,391 L216,391Z" fill="#b9ad8e"/><path d="M193,380 L195.5,380 L196.5,390 L194,390Z" fill="#9c9074"/></g><g filter="url(#p3b2)"><path d="M286.5,-3.8 L286.9,2.2 L287.6,10.7 L288.3,20.6 L288.9,30.8 L289.3,40 L289.2,49.1 L289,58.8 L288.6,68.2 L288.2,76.2 L288,81.9 L292,82.1 L292.5,76.5 L293.2,68.5 L293.9,59.1 L294.5,49.3 L294.7,40 L294.4,30.5 L293.7,20.2 L292.8,10.3 L292,1.8 L291.5,-4.2Z" fill="#7e4626"/><path d="M294,-3.7 L294.6,1.7 L295.5,9.3 L296.4,18.2 L297.2,27.1 L297.8,35.2 L298,42.4 L298,49.7 L297.8,56.7 L297.5,63.4 L297,69.6 L296.2,75.7 L295.1,81.7 L293.9,87.3 L292.8,92 L292.1,95.5 L295.9,96.5 L297,93.2 L298.5,88.5 L300.2,82.9 L301.8,76.7 L303,70.4 L303.7,63.9 L304.2,57 L304.4,49.8 L304.4,42.4 L304.2,34.8 L303.7,26.6 L302.7,17.5 L301.6,8.6 L300.6,1 L300,-4.3Z" fill="#4a3a24"/><path d="M302.6,-3.3 L303.4,1.4 L304.7,8 L306,15.6 L307.3,23.3 L308,30.3 L308.3,36.7 L308.4,43 L308.3,49.2 L307.9,55.4 L307.3,61.4 L306.3,67.8 L304.8,74.7 L303.1,81.4 L301.6,87.2 L300.6,91.3 L305.4,92.7 L306.8,88.7 L308.8,83.1 L311.1,76.5 L313.2,69.4 L314.7,62.6 L315.6,56.1 L316.2,49.7 L316.4,43.1 L316.4,36.4 L316,29.7 L315.1,22.2 L313.6,14.2 L311.9,6.5 L310.4,-0.1 L309.4,-4.7Z" fill="#55452c"/><path d="M313.5,-3.8 L314.2,0.2 L315.1,5.9 L316.1,12.4 L317,19 L317.5,25.1 L317.5,30.9 L317.1,37.1 L316.6,43.1 L316.1,48.2 L315.8,51.9 L318.2,52.1 L318.6,48.5 L319.3,43.4 L319.9,37.4 L320.4,31 L320.5,24.9 L320,18.7 L319.1,11.9 L318.1,5.4 L317.1,-0.3 L316.5,-4.2Z" fill="#6c5c3a"/><path d="M303.1,89.5 L304.8,89.4 L307,89.1 L309.7,88.9 L312.3,88.7 L314.7,88.7 L317.1,88.9 L319.8,89.3 L322.5,89.7 L324.9,90.2 L326.6,90.4 L327.4,87.6 L325.8,86.9 L323.6,86 L320.9,85 L318.1,84 L315.3,83.3 L312.5,82.9 L309.6,82.7 L306.8,82.6 L304.5,82.5 L302.9,82.5Z" fill="#e0b070"/><path d="M288.6,117 L290.1,117.2 L292.4,117.5 L294.9,117.9 L297.2,118.2 L298.7,118.5 L299.3,115.5 L297.8,115.2 L295.6,114.6 L293.1,114 L290.9,113.4 L289.4,113Z" fill="#e4d2a0"/><path d="M288.3,129.4 L289.8,129.7 L292.1,130.3 L294.7,130.8 L296.9,131.3 L298.5,131.7 L299.5,128.3 L298,127.8 L295.8,126.9 L293.4,126 L291.2,125.2 L289.7,124.6Z" fill="#e4d2a0"/><path d="M377.5,-2.2 L375.8,1.1 L373.3,5.8 L370.4,11.5 L367.7,17.6 L365.7,23.7 L364.5,29.5 L363.9,35.4 L363.7,41.3 L363.9,47.1 L364.6,52.8 L365.8,58.4 L367.5,63.7 L369.6,68.8 L371.8,73.5 L373.9,77.9 L376.2,82.2 L378.8,86.5 L381.3,90.3 L383.5,93.5 L385,95.8 L391,92.2 L389.7,89.8 L387.9,86.4 L385.9,82.5 L383.8,78.3 L382.1,74.1 L380.5,69.8 L378.8,65.2 L377.4,60.5 L376.2,55.8 L375.4,51.2 L375,46.4 L374.9,41.3 L375,36.2 L375.5,31.1 L376.3,26.3 L377.8,21.4 L380,15.9 L382.6,10.4 L384.9,5.7 L386.5,2.2Z" fill="#3c2f1c"/><path d="M384.2,5.2 L382.9,8.2 L381.1,12.3 L379.1,17.3 L377.3,22.5 L376,27.6 L375.4,32.5 L375.1,37.6 L375.1,42.7 L375.4,47.6 L376,52.4 L377.2,57.1 L378.9,61.9 L380.8,66.3 L382.5,69.9 L383.6,72.6 L386.4,71.4 L385.4,68.7 L383.9,65 L382.3,60.6 L380.9,56 L380,51.6 L379.4,47.2 L379.1,42.5 L379.1,37.7 L379.4,32.9 L380,28.4 L381.1,23.7 L382.9,18.7 L384.8,13.9 L386.6,9.7 L387.8,6.8Z" fill="#b08a3c"/></g></g></svg></div>

 <div id="tri"></div>
 <div id="pop"></div>
 <div class="lb" id="l1" style="top:560px">Image Size</div>
 <div class="lb" id="l2" style="top:624px">Steps</div>
 <div class="lb" id="l3" style="top:682px">Seed</div>
 <div class="lb" id="l4" style="top:742px">Guidance Scale</div>
 <div class="vl" id="v1" style="top:559px">512 x 512</div>
 <div class="vl" id="v2" style="top:623px;left:1225.5px;letter-spacing:1px">50</div>
 <div class="vl" id="v3" style="top:687px;letter-spacing:1px">6789</div>
 <div class="vl" id="v4" style="top:742px;left:1229px">7.5</div>
 <div class="ul" style="top:593.5px"></div>
 <div class="ul" style="top:657px"></div>
 <div class="ul" style="top:721.5px"></div>
 <div class="ul" style="top:775.5px"></div>
</div></div>
</body>
</html>
